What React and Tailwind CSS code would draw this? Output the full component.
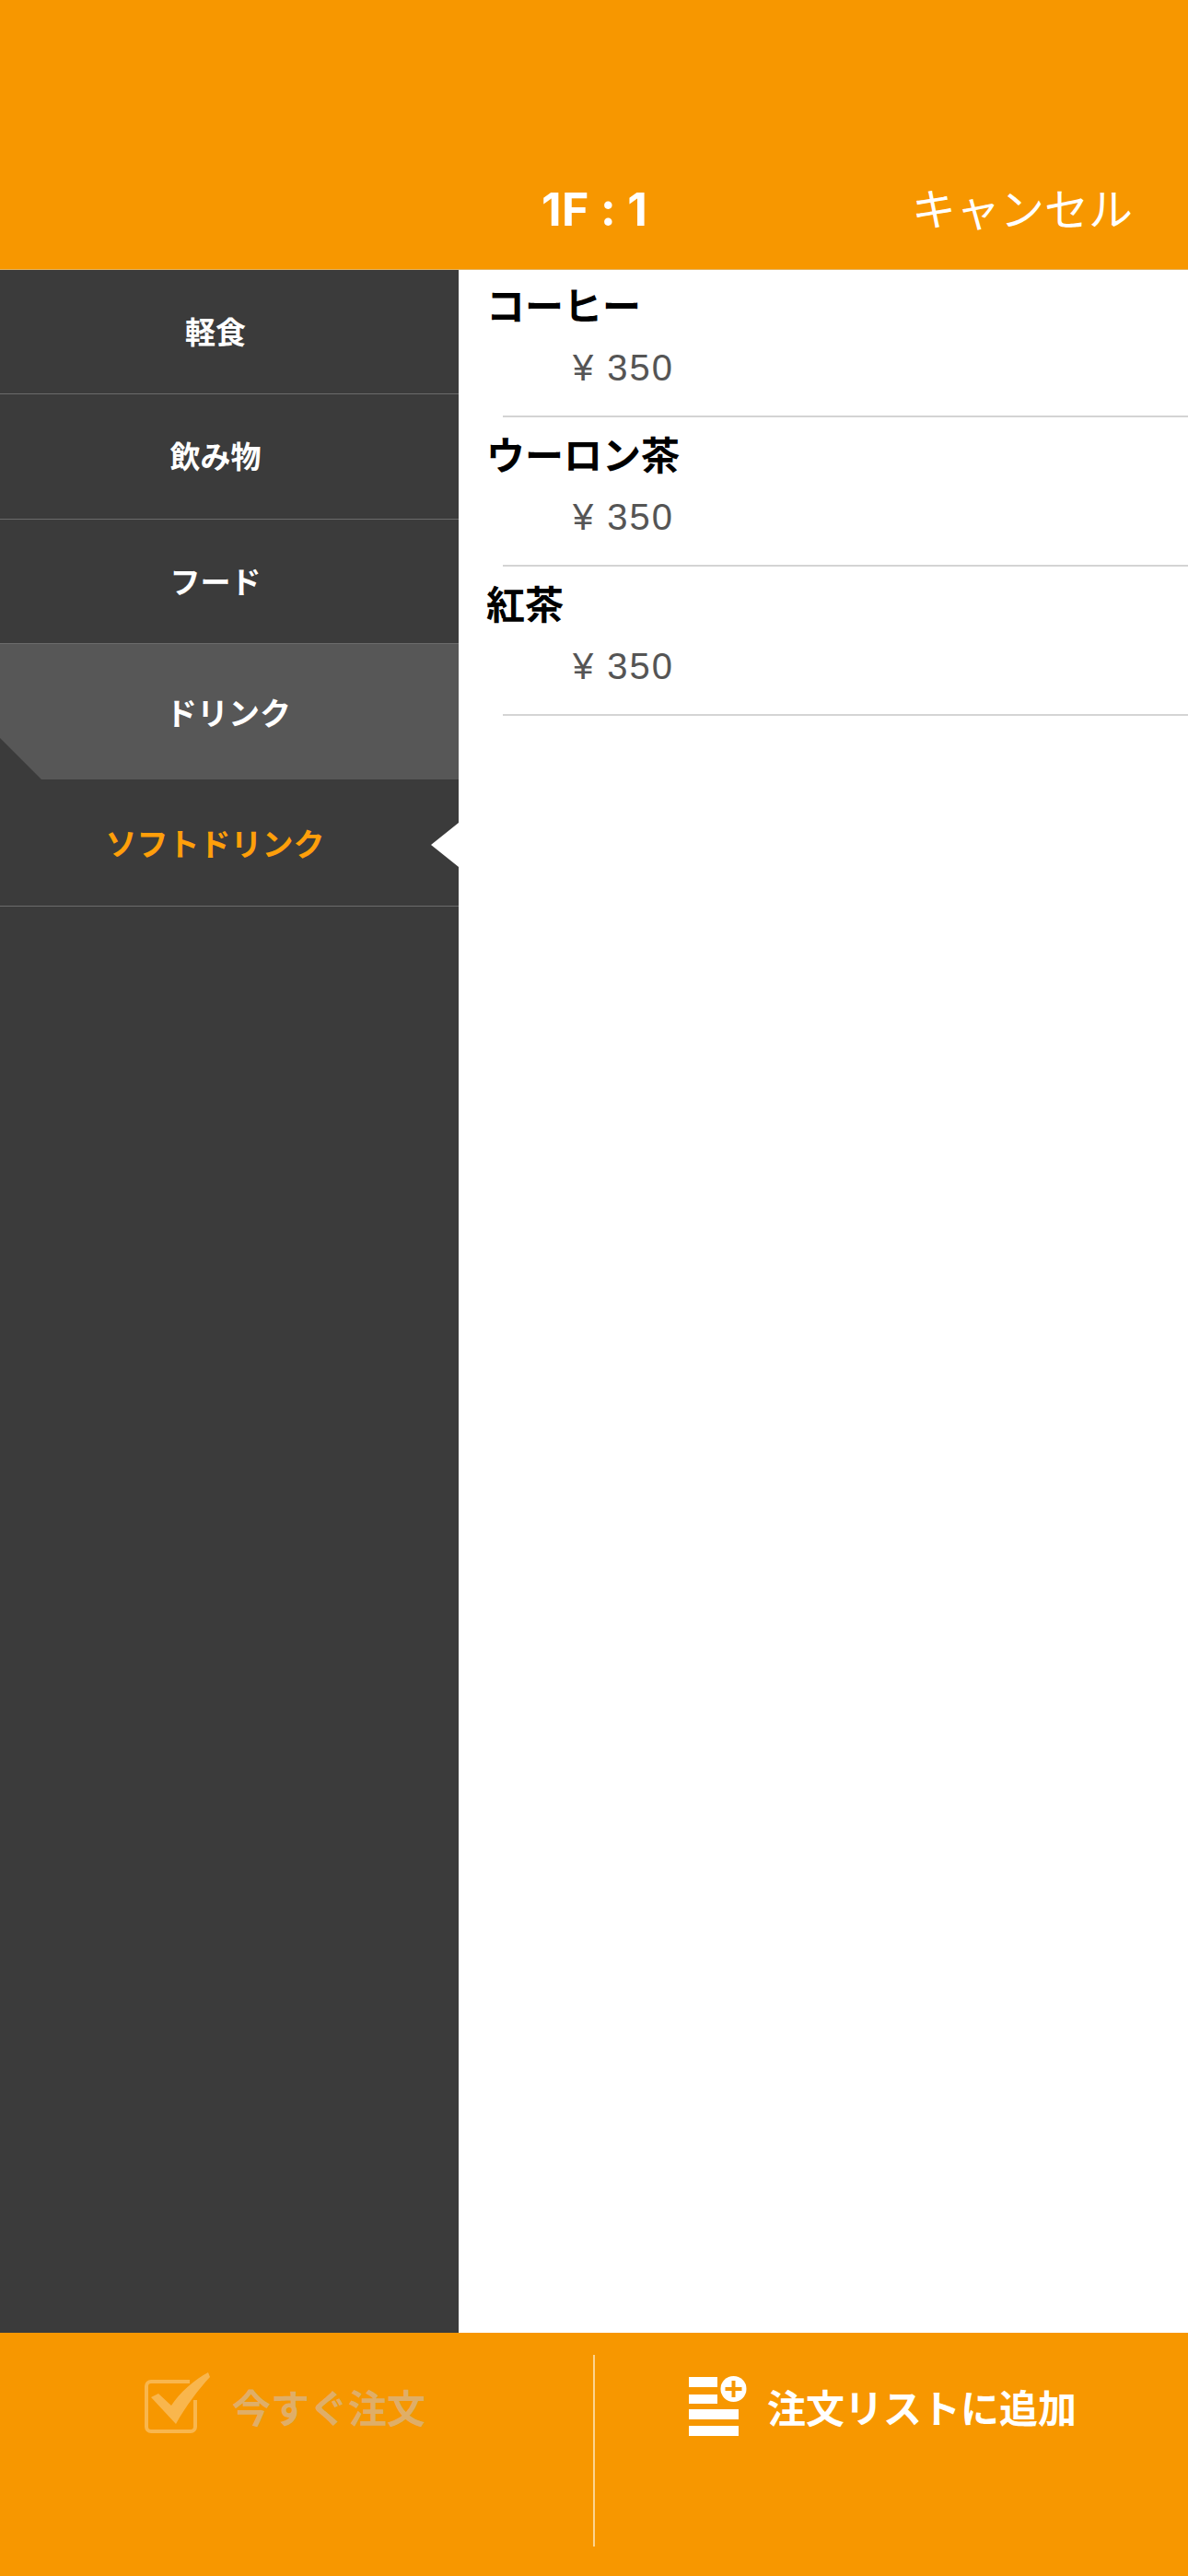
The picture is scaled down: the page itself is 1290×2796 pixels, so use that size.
const jp = "font-['Inter','Noto_Sans_CJK_JP',sans-serif]";

const categories = [
  { label: "軽食", h: "h-[135px]" },
  { label: "飲み物", h: "h-[136px]" },
  { label: "フード", h: "h-[135px]" },
];

const items = [
  { name: "コーヒー", price: "¥ 350" },
  { name: "ウーロン茶", price: "¥ 350" },
  { name: "紅茶", price: "¥ 350" },
];

function CheckIcon() {
  return (
    <svg width="72" height="66" viewBox="0 0 72 66" className="shrink-0 opacity-30">
      <path
        d="M49 10H7a5 5 0 0 0-5 5v44a5 5 0 0 0 5 5h43a5 5 0 0 0 5-5V30"
        fill="none"
        stroke="#fff"
        strokeWidth="4"
      />
      <path d="M7 27 L15 23 L29 36 C38 22 54 8 69 0 L71 5 C59 18 45 36 34 56 Z" fill="#fff" />
    </svg>
  );
}

function ListAddIcon() {
  return (
    <svg width="63" height="65" viewBox="0 0 63 65" className="shrink-0">
      <path d="M0 1h31v11H0zM0 20h31v10H0zM0 36h54v11H0zM0 54h54v11H0z" fill="#fff" />
      <circle cx="48.5" cy="14" r="14" fill="#fff" />
      <path d="M46.5 5h4v7h7v4h-7v7h-4v-7h-7v-4h7z" fill="#f79700" />
    </svg>
  );
}

function MenuRow({ name, price, first }) {
  return (
    <div className={`flex flex-col border-b-2 border-[#d4d4d4] ml-[48px] ${first ? "h-[160px]" : "h-[162px]"}`}>
      <div className={`-ml-[18px] text-[42px] leading-[60px] font-bold text-black ${first ? "mt-[10px]" : "mt-[12px]"}`}>
        {name}
      </div>
      <div className="ml-[76px] mt-[10px] text-[40px] leading-[52px] text-[#555] font-['Liberation_Sans','Noto_Sans_CJK_JP',sans-serif] tracking-[2px]">
        {price}
      </div>
    </div>
  );
}

export default function App() {
  return (
    <div className={`${jp} w-[1290px] h-[2796px] flex flex-col overflow-hidden bg-white`}>
      <header className="h-[293px] shrink-0 bg-[#f79700] border-b border-[#e3b25f] flex items-end text-white pb-[35px]">
        <div className="w-[588px] shrink-0" />
        <div className="w-[402px] shrink-0 text-[50px] leading-[60px] font-bold tracking-[0.4px]">1F : 1</div>
        <div className="text-[48px] leading-[60px] -mb-[1px]">キャンセル</div>
      </header>

      <div className="flex-1 flex min-h-0">
        <aside className="w-[498px] shrink-0 bg-[#3b3b3b] flex flex-col">
          {categories.map((c) => (
            <div
              key={c.label}
              className={`${c.h} w-full border-b border-[#6b6b6b] flex items-center justify-center pr-[30px] pt-[3px] text-white text-[33px] font-bold`}
            >
              {c.label}
            </div>
          ))}
          <div className="h-[147px] bg-[#575757] [clip-path:polygon(0_0,100%_0,100%_100%,45px_100%,0_102px)] flex items-center justify-center pt-[4px] pr-[2px] text-white text-[34px] font-bold">
            ドリンク
          </div>
          <div className="relative h-[138px] border-b border-[#6b6b6b] flex items-center justify-center pr-[31px] pt-[3px] text-[34px] font-bold text-[#ff9f0a]">
            ソフトドリンク
            <svg width="30" height="48" viewBox="0 0 30 48" className="absolute right-0 top-[47px]">
              <path d="M30 0V48L0 24Z" fill="#fff" />
            </svg>
          </div>
        </aside>

        <main className="flex-1 min-w-0">
          {items.map((item, i) => (
            <MenuRow key={item.name} name={item.name} price={item.price} first={i === 0} />
          ))}
        </main>
      </div>

      <footer className="h-[264px] shrink-0 bg-[#f79700] flex pt-[24px] pb-[32px]">
        <div className="w-[646px] shrink-0 border-r-2 border-[#fcd48e] flex items-start pl-[157px] gap-[23px] pt-[19px]">
          <CheckIcon />
          <span className="text-[42px] leading-[66px] font-bold text-[#dfae68] mt-[7px]">今すぐ注文</span>
        </div>
        <div className="flex-1 flex items-start pl-[102px] gap-[22px] pt-[23px]">
          <ListAddIcon />
          <span className="text-[42px] leading-[66px] font-bold text-white mt-[3px]">注文リストに追加</span>
        </div>
      </footer>
    </div>
  );
}
